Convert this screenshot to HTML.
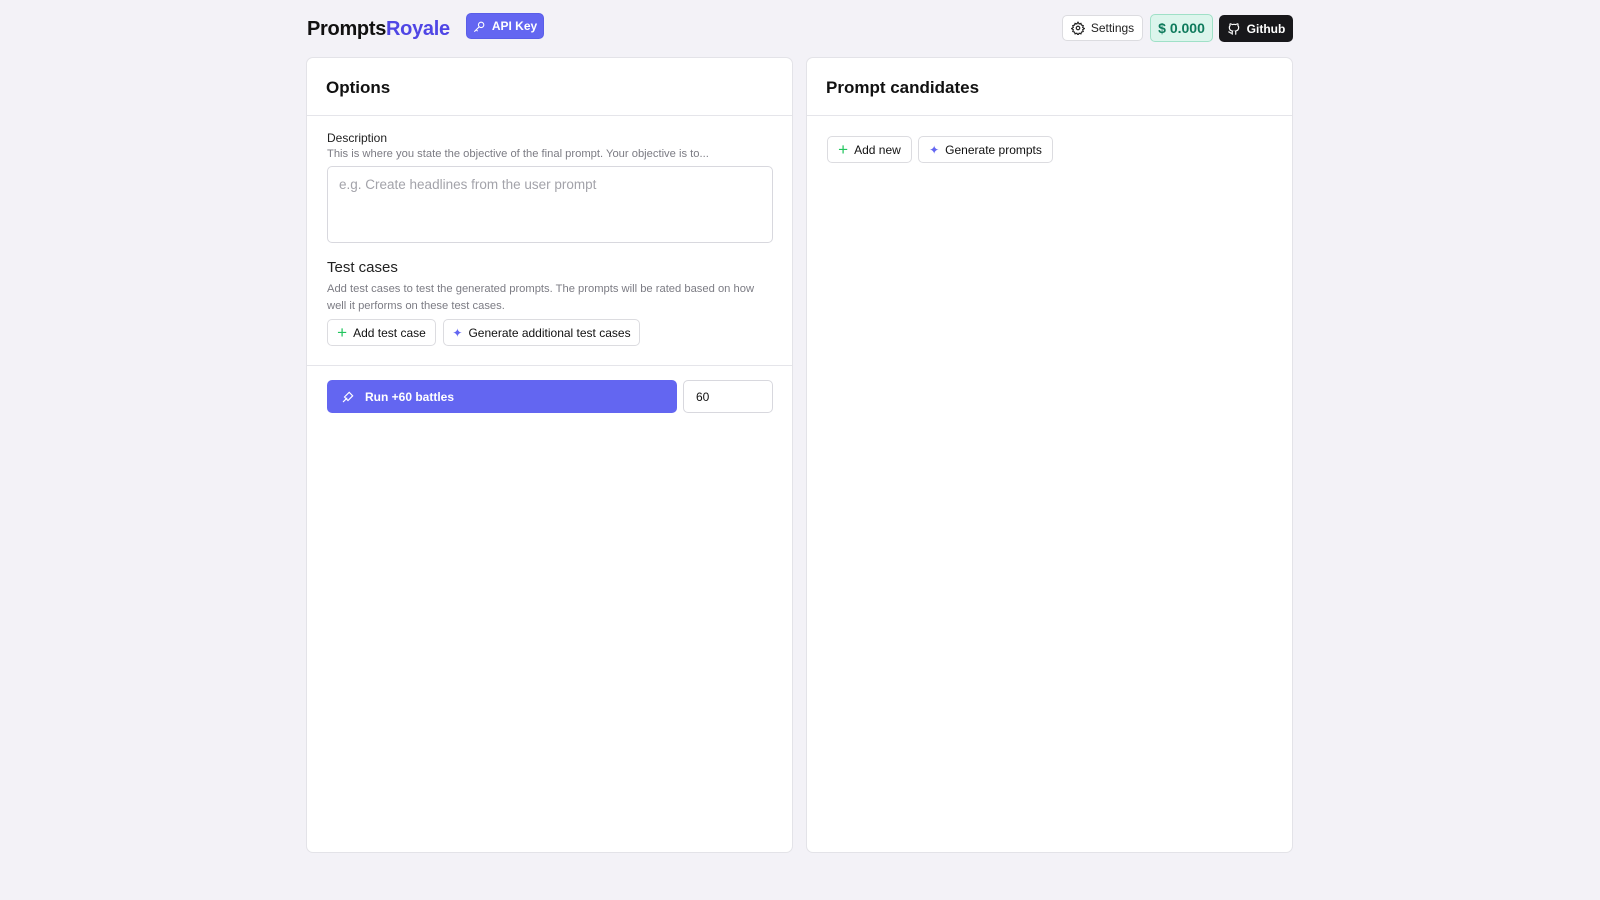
<!DOCTYPE html>
<html><head><meta charset="utf-8"><style>
*{box-sizing:border-box;margin:0;padding:0}
body{width:1600px;height:900px;background:#f3f2f7;font-family:"Liberation Sans",sans-serif;color:#111;position:relative;overflow:hidden}
.abs{position:absolute}
.btn{position:absolute;display:flex;align-items:center;justify-content:center;gap:6px;border-radius:5px;font-size:12px;font-weight:bold;padding:0 6px;white-space:nowrap}
.btn svg{flex-shrink:0}
.out{background:#fff;border:1px solid #dcdce0;color:#222}
.card{position:absolute;background:#fff;border:1px solid #e3e3e8;border-radius:7px;top:57px;height:796px;width:487px}
.hdr{height:58px;border-bottom:1px solid #e5e5ea;padding:20px 0 0 19px;font-size:17px;font-weight:bold}
.muted{color:#7c7c84;font-size:11.2px}
</style></head><body>
<div class="abs" style="left:307px;top:18px;font-size:20px;font-weight:bold;letter-spacing:-0.3px">Prompts<span style="color:#4f46e5">Royale</span></div>
<div class="btn" style="left:466px;top:13px;height:26px;width:78px;background:#6366f1;color:#fff;border:1px solid #5a5ee8">
<svg width="13" height="13" viewBox="0 0 24 24" fill="none" stroke="#fff" stroke-width="2" stroke-linecap="round"><circle cx="15" cy="9" r="5"/><path d="M11 13l-8 8M6 18l2 2"/></svg>API Key</div>
<div class="btn out" style="left:1062px;top:15px;height:26px;width:81px;font-weight:normal">
<svg width="14" height="14" viewBox="0 0 24 24" fill="none" stroke="#222" stroke-width="2"><circle cx="12" cy="12" r="3"/><path d="M12 2l2 3 3-1 1 3 3 1-1 3 3 2-3 2 1 3-3 1-1 3-3-1-2 3-2-3-3 1-1-3-3-1 1-3-3-2 3-2-1-3 3-1 1-3 3 1z"/></svg>Settings</div>
<div class="btn" style="left:1150px;top:14px;height:28px;width:63px;background:#dcf5ec;border:1px solid #9fe0c7;color:#0f7a5c;font-size:14px">$ 0.000</div>
<div class="btn" style="left:1219px;top:15px;height:27px;width:74px;background:#18181b;color:#fff">
<svg width="14" height="14" viewBox="0 0 24 24" fill="none" stroke="#fff" stroke-width="2" stroke-linecap="round"><path d="M9 19c-4 1-4-2-6-2m12 4v-3.5c0-1 .1-1.4-.5-2 2.8-.3 5.5-1.4 5.5-6a4.6 4.6 0 0 0-1.3-3.2 4.2 4.2 0 0 0-.1-3.2s-1.1-.3-3.5 1.3a12 12 0 0 0-6.2 0C6.5 2.8 5.4 3.1 5.4 3.1a4.2 4.2 0 0 0-.1 3.2A4.6 4.6 0 0 0 4 9.5c0 4.6 2.7 5.7 5.5 6-.6.6-.6 1.2-.5 2V21"/></svg>Github</div>

<div class="card" style="left:306px">
<div class="hdr">Options</div>
<div class="abs" style="left:20px;top:73px;font-size:12px;color:#222">Description</div>
<div class="abs muted" style="left:20px;top:90px">This is where you state the objective of the final prompt. Your objective is to...</div>
<div class="abs" style="left:20px;top:108px;width:446px;height:77px;border:1px solid #d8d8de;border-radius:5px;padding:10px 11px;font-size:13.5px;color:#a3a3aa">e.g. Create headlines from the user prompt</div>
<div class="abs" style="left:20px;top:201px;font-size:15px;color:#222">Test cases</div>
<div class="abs muted" style="left:20px;top:223px;width:448px;line-height:16.5px">Add test cases to test the generated prompts. The prompts will be rated based on how well it performs on these test cases.</div>
<div class="btn out" style="left:20px;top:261px;height:27px;width:109px;font-weight:normal;color:#111"><span style="color:#22c55e;font-size:17px;font-weight:normal">+</span>Add test case</div>
<div class="btn out" style="left:136px;top:261px;height:27px;width:197px;font-weight:normal;color:#111"><span style="color:#6366f1">✦</span>Generate additional test cases</div>
<div class="abs" style="left:0;top:307px;width:485px;border-top:1px solid #e5e5ea"></div>
<div class="btn" style="left:20px;top:322px;height:33px;width:350px;background:#6366f1;color:#fff;padding-left:14px;gap:10px;justify-content:flex-start">
<svg width="14" height="14" viewBox="0 0 24 24" fill="none" stroke="#fff" stroke-width="2" stroke-linecap="round"><path d="M4 20l6-6M14 4l6 6-8 8-6-6z"/></svg>Run +60 battles</div>
<div class="abs" style="left:376px;top:322px;width:90px;height:33px;border:1px solid #d8d8de;border-radius:5px;padding:9px 12px;font-size:12px">60</div>
</div>

<div class="card" style="left:806px">
<div class="hdr">Prompt candidates</div>
<div class="btn out" style="left:20px;top:78px;height:27px;width:85px;font-weight:normal;color:#111"><span style="color:#22c55e;font-size:17px">+</span>Add new</div>
<div class="btn out" style="left:111px;top:78px;height:27px;width:135px;font-weight:normal;color:#111"><span style="color:#6366f1">✦</span>Generate prompts</div>
</div>
</body></html>
